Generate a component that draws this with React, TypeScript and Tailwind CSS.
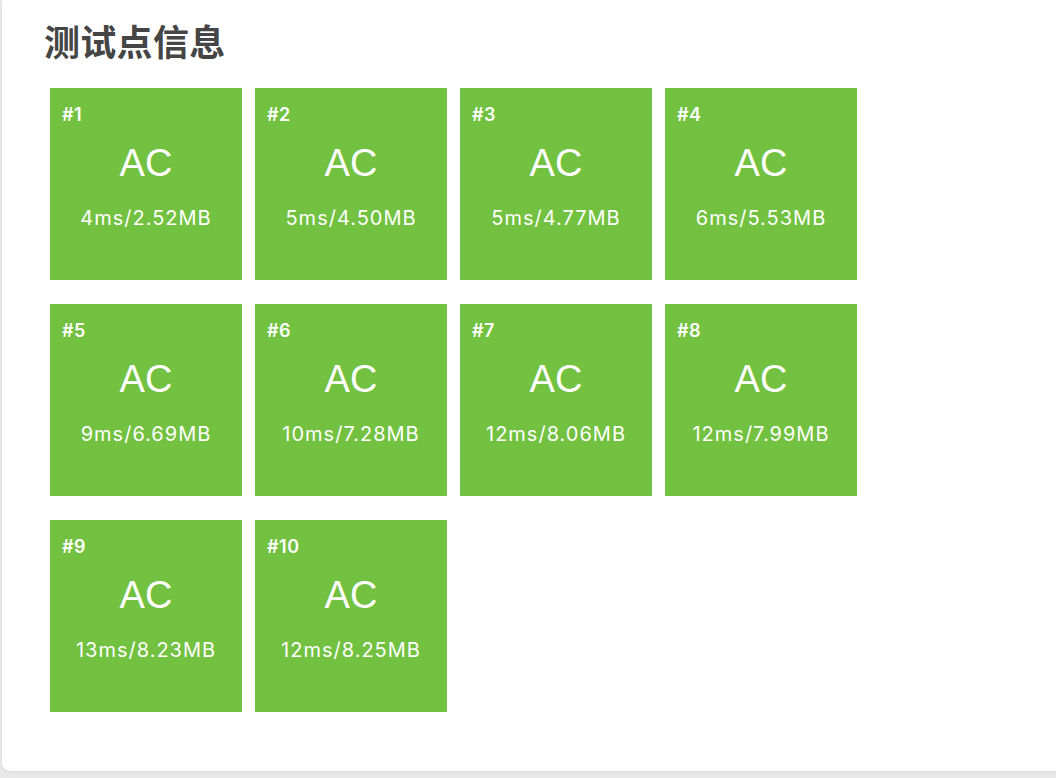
import React from 'react';

interface CaseResult {
  id: number;
  status: string;
  time: number;
  memory: string;
}

const cases: CaseResult[] = [
  { id: 1, status: 'AC', time: 4, memory: '2.52MB' },
  { id: 2, status: 'AC', time: 5, memory: '4.50MB' },
  { id: 3, status: 'AC', time: 5, memory: '4.77MB' },
  { id: 4, status: 'AC', time: 6, memory: '5.53MB' },
  { id: 5, status: 'AC', time: 9, memory: '6.69MB' },
  { id: 6, status: 'AC', time: 10, memory: '7.28MB' },
  { id: 7, status: 'AC', time: 12, memory: '8.06MB' },
  { id: 8, status: 'AC', time: 12, memory: '7.99MB' },
  { id: 9, status: 'AC', time: 13, memory: '8.23MB' },
  { id: 10, status: 'AC', time: 12, memory: '8.25MB' },
];

function CaseTile({ item }: { item: CaseResult }) {
  return (
    <div className="w-[192px] h-[192px] bg-[#72c140] text-white flex flex-col px-3 pt-4">
      <div className="font-['Inter',sans-serif] text-[18px] leading-[22px] font-semibold tracking-[0.5px]">#{item.id}</div>
      <div className="mt-[17px] text-center text-[38px] leading-[40px]">{item.status}</div>
      <div className="mt-[23px] text-center font-['Inter',sans-serif] text-[20px] leading-[24px] font-normal tracking-[1px]">
        {item.time}ms/{item.memory}
      </div>
    </div>
  );
}

export default function App() {
  return (
    <div
      className="h-screen bg-[#e9e9e9] pl-[2px] pb-[7px] flex flex-col"
      style={{ fontFamily: '"Liberation Sans", "Noto Sans CJK SC", sans-serif' }}
    >
      {/* 卡片 */}
      <div className="flex-1 bg-white rounded-bl-[8px] shadow-[0_1px_3px_rgba(0,0,0,0.08)] pl-[48px] pt-[22px]">
        <h2 className="text-[36px] leading-[44px] font-bold text-[#454545] ml-[-6px] tracking-[0.3px]">测试点信息</h2>
        <div className="mt-[22px] grid grid-cols-[repeat(4,192px)] gap-x-[13px] gap-y-[24px]">
          {cases.map((c) => (
            <CaseTile key={c.id} item={c} />
          ))}
        </div>
      </div>
    </div>
  );
}
